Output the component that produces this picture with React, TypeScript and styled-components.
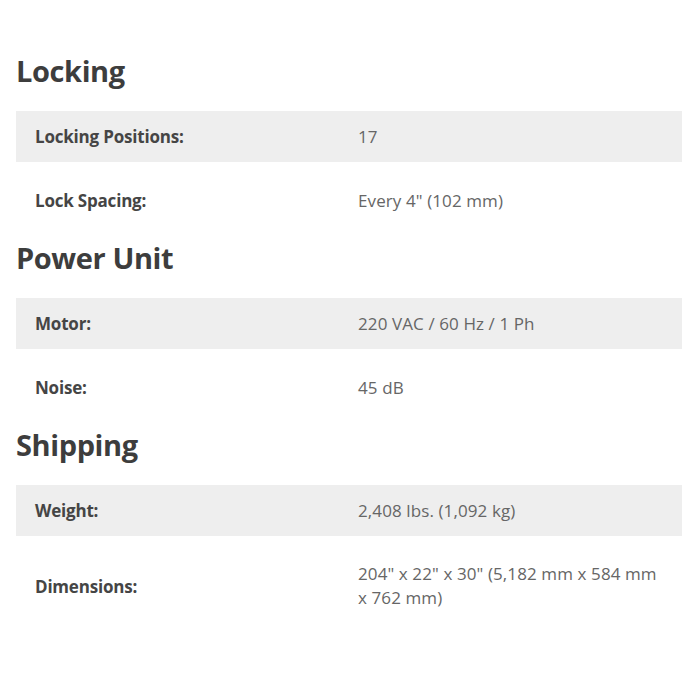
import React from "react";
import styled, { createGlobalStyle } from "styled-components";

const Global = createGlobalStyle`
  html, body { margin: 0; padding: 0; background: #ffffff; }
  body { font-family: "Open Sans", "Noto Sans", sans-serif; }
`;

const Page = styled.div`
  width: 666px;
  padding: 53px 18px 40px 16px;
`;

const Heading = styled.h2`
  margin: 0 0 22px;
  font-size: 29px;
  line-height: 36px;
  font-weight: 700;
  color: #3d3d3d;
  letter-spacing: -0.4px;
`;

const Row = styled.div<{ $shaded: boolean }>`
  display: grid;
  grid-template-columns: 323px 1fr;
  align-items: center;
  background: ${(p) => (p.$shaded ? "#eeeeee" : "transparent")};
  padding: ${(p) => (p.$shaded ? "13px 0 13px" : "26px 0 27px")};
`;

const Label = styled.div`
  padding-left: 19px;
  font-size: 17px;
  line-height: 25px;
  font-weight: 700;
  color: #454545;
  letter-spacing: -0.2px;
`;

const Value = styled.div`
  padding: 0 16px 0 19px;
  font-size: 17px;
  line-height: 24px;
  font-weight: 400;
  color: #666666;
  letter-spacing: 0.1px;
`;

type Spec = { label: string; value: string };
const sections: { title: string; rows: Spec[] }[] = [
  {
    title: "Locking",
    rows: [
      { label: "Locking Positions:", value: "17" },
      { label: "Lock Spacing:", value: "Every 4\" (102 mm)" },
    ],
  },
  {
    title: "Power Unit",
    rows: [
      { label: "Motor:", value: "220 VAC / 60 Hz / 1 Ph" },
      { label: "Noise:", value: "45 dB" },
    ],
  },
  {
    title: "Shipping",
    rows: [
      { label: "Weight:", value: "2,408 lbs. (1,092 kg)" },
      { label: "Dimensions:", value: "204\" x 22\" x 30\" (5,182 mm x 584 mm x 762 mm)" },
    ],
  },
];

export default function App() {
  return (
    <>
      <Global />
      <Page>
        {sections.map((s) => (
          <section key={s.title}>
            <Heading>{s.title}</Heading>
            {s.rows.map((r, i) => (
              <Row key={r.label} $shaded={i % 2 === 0}>
                <Label>{r.label}</Label>
                <Value>{r.value}</Value>
              </Row>
            ))}
          </section>
        ))}
      </Page>
    </>
  );
}
